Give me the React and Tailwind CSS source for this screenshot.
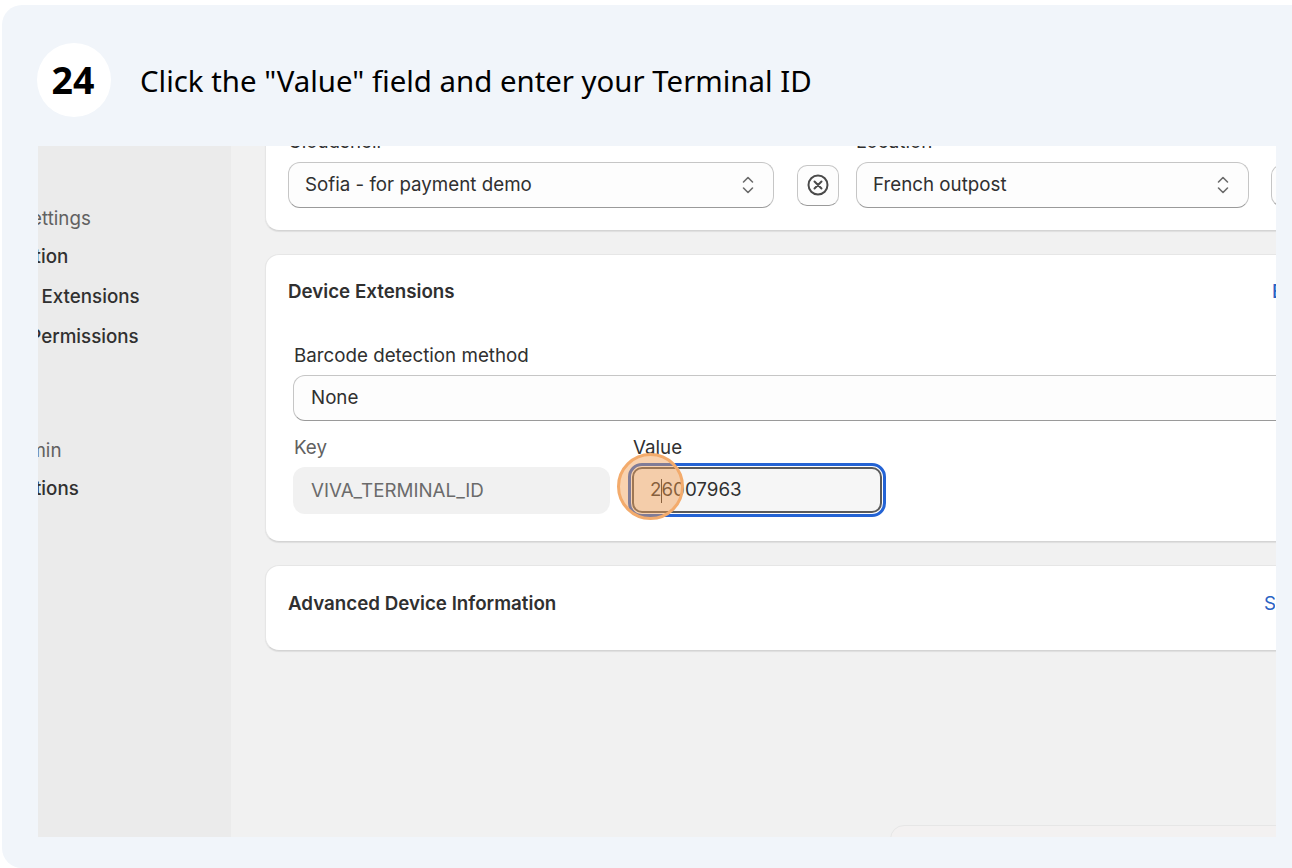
import React from 'react';

const Updown = () => (
    <svg width="14" height="20" viewBox="0 0 14 20" fill="none" stroke="#6b6b6b" strokeWidth="1.6" strokeLinecap="round" strokeLinejoin="round">
        <path d="M2.5 7 7 2.5 11.5 7" />
        <path d="M2.5 13 7 17.5 11.5 13" />
    </svg>
);

const SelectBox = ({ value, className }) => (
    <div className={`h-[46px] shrink-0 flex items-center justify-between pl-[16px] pr-[18px] bg-[#fdfdfd] rounded-[12px] border border-[#c6c6c6] border-b-[#9a9a9a] text-[18.75px] text-[#303030] ${className}`}>
        <span className="pt-[1px]">{value}</span>
        <Updown />
    </div>
);

const navItems = [
    { text: 'Settings', cls: 'mt-[61px] -ml-[19px] text-[#616161]' },
    { text: 'Application', cls: 'mt-[14px] -ml-[71px] text-[#303030] font-medium' },
    { text: 'Device Extensions', cls: 'mt-[16px] -ml-[63px] text-[#303030] font-medium' },
    { text: 'User Permissions', cls: 'mt-[16px] -ml-[56px] text-[#303030] font-medium' },
    { text: 'Admin', cls: 'mt-[90px] -ml-[33px] text-[#616161]' },
    { text: 'Actions', cls: 'mt-[14px] -ml-[27px] text-[#303030] font-medium' },
];

const App = () => {
    return (
        <div className="h-screen bg-white pt-[5px] pl-[2px] font-['Inter',sans-serif]">
            <div className="h-full flex flex-col bg-[#f1f5fa] rounded-l-[20px] overflow-hidden">
                {/* STEP HEADER */}
                <div className="flex items-center pt-[38px] pl-[35px] shrink-0">
                    <div className="w-[74px] h-[74px] pr-[2px] rounded-full bg-white flex items-center justify-center font-['Noto_Sans',sans-serif] font-bold text-[37.5px] text-black">
                        24
                    </div>
                    <h1 className="ml-[29px] pt-[2px] font-['Noto_Sans',sans-serif] text-[29.4px] text-black">
                        Click the "Value" field and enter your Terminal ID
                    </h1>
                </div>

                {/* SCREENSHOT */}
                <div className="mt-[29px] ml-[36px] mr-[16px] h-[691px] flex overflow-hidden bg-[#f1f1f1]">
                    <aside className="w-[193px] shrink-0 bg-[#ebebeb] overflow-hidden text-[18.75px] leading-[24px] whitespace-nowrap">
                        {navItems.map((item) => (
                            <div key={item.text} className={item.cls}>{item.text}</div>
                        ))}
                    </aside>

                    <main className="flex-1 min-w-0 overflow-hidden pl-[34px]">
                        {/* LOCATION CARD */}
                        <div className="w-[1100px] h-[125px] -mt-[40px] pt-[23px] pl-[22px] bg-white rounded-[14px] border border-[#e6e6e6] border-b-[#d4d4d4] shadow-[0_1px_1px_rgba(0,0,0,0.08)]">
                            <div className="flex text-[18.75px] leading-[24px] text-[#303030]">
                                <span className="w-[568px]">Cloudshell</span>
                                <span>Location</span>
                            </div>
                            <div className="flex items-center mt-[8px]">
                                <SelectBox value="Sofia - for payment demo" className="w-[486px]" />
                                <button className="ml-[23px] w-[42px] h-[41px] shrink-0 flex items-center justify-center rounded-[10px] border border-[#c6c6c6] border-b-[#9a9a9a] bg-[#fdfdfd]" aria-label="Clear">
                                    <svg width="22" height="22" viewBox="0 0 22 22" fill="none" stroke="#4a4a4a" strokeWidth="2" strokeLinecap="round">
                                        <circle cx="11" cy="11" r="9.5" />
                                        <path d="M7.5 7.5 14.5 14.5M14.5 7.5 7.5 14.5" />
                                    </svg>
                                </button>
                                <SelectBox value="French outpost" className="ml-[17px] w-[393px]" />
                                <button className="ml-[22px] w-[42px] h-[41px] shrink-0 rounded-[10px] border border-[#c6c6c6] border-b-[#9a9a9a] bg-[#fdfdfd]" aria-label="More"></button>
                            </div>
                        </div>

                        {/* DEVICE EXTENSIONS */}
                        <div className="w-[1100px] h-[288px] mt-[23px] bg-white rounded-[14px] border border-[#e6e6e6] border-b-[#d4d4d4] shadow-[0_1px_1px_rgba(0,0,0,0.08)] pl-[22px] pt-[25px]">
                            <div className="flex items-center justify-between">
                                <h2 className="text-[18.75px] leading-[24px] font-semibold text-[#303030]">Device Extensions</h2>
                                <span className="mr-[82px] text-[18.75px] leading-[24px] font-medium text-[#2a62c4] w-[10px] overflow-hidden ml-auto">Edit</span>
                            </div>
                            <div className="ml-[6px] mt-[40px] text-[18.75px] leading-[24px] text-[#303030]">Barcode detection method</div>
                            <div className="ml-[5px] mt-[7px] h-[46px] w-[1000px] flex items-center pl-[17px] pt-[1px] bg-[#fdfdfd] rounded-l-[12px] border border-[#c6c6c6] border-b-[#9a9a9a] text-[18.75px] text-[#303030]">
                                None
                            </div>
                            <div className="ml-[5px] mt-[15px] flex">
                                <div className="w-[317px] shrink-0">
                                    <div className="pl-[1px] text-[18.75px] leading-[24px] text-[#616161]">Key</div>
                                    <div className="mt-[7px] h-[47px] flex items-center pl-[18px] pt-[1px] rounded-[12px] bg-[#f1f1f1] text-[18.75px] text-[#6b6b6b]">VIVA_TERMINAL_ID</div>
                                </div>
                                <div className="relative ml-[22px] w-[250px] shrink-0">
                                    <div className="pl-[1px] text-[18.75px] leading-[24px] text-[#303030]">Value</div>
                                    <div className="mt-[7px] h-[46px] flex items-center pl-[16px] pt-[1px] rounded-[10px] bg-[#f6f6f6] border-2 border-[#5a5a5a] outline-[3px] outline-offset-[1px] outline-[#2463d4] text-[18.75px] text-[#303030]">
                                        <span>2</span>
                                        <span className="w-[1px] h-[24px] -mr-[1px] bg-[#303030]"></span>
                                        <span>6007963</span>
                                    </div>
                                    {/* click marker */}
                                    <div className="absolute left-[-15px] top-[17px] w-[67px] h-[67px] rounded-full border-[3px] border-[#f3ab6c] bg-[#f29c4e]/45"></div>
                                </div>
                            </div>
                        </div>

                        {/* ADVANCED INFO */}
                        <div className="w-[1100px] h-[86px] mt-[23px] pt-[26px] flex items-start justify-between bg-white rounded-[14px] border border-[#e6e6e6] border-b-[#d4d4d4] shadow-[0_1px_1px_rgba(0,0,0,0.08)] pl-[22px]">
                            <h2 className="text-[18.75px] leading-[24px] font-semibold text-[#303030]">Advanced Device Information</h2>
                            <span className="mr-[89px] text-[18.75px] leading-[24px] text-[#2a62c4] w-[11px] overflow-hidden">Show</span>
                        </div>

                        {/* floating footer card, mostly cut off */}
                        <div className="ml-[625px] mt-[174px] w-[500px] h-[40px] rounded-[14px] border border-[#e6e6e6] bg-[#f3f1f1]"></div>
                    </main>
                </div>
            </div>
        </div>
    );
};

export default App;
